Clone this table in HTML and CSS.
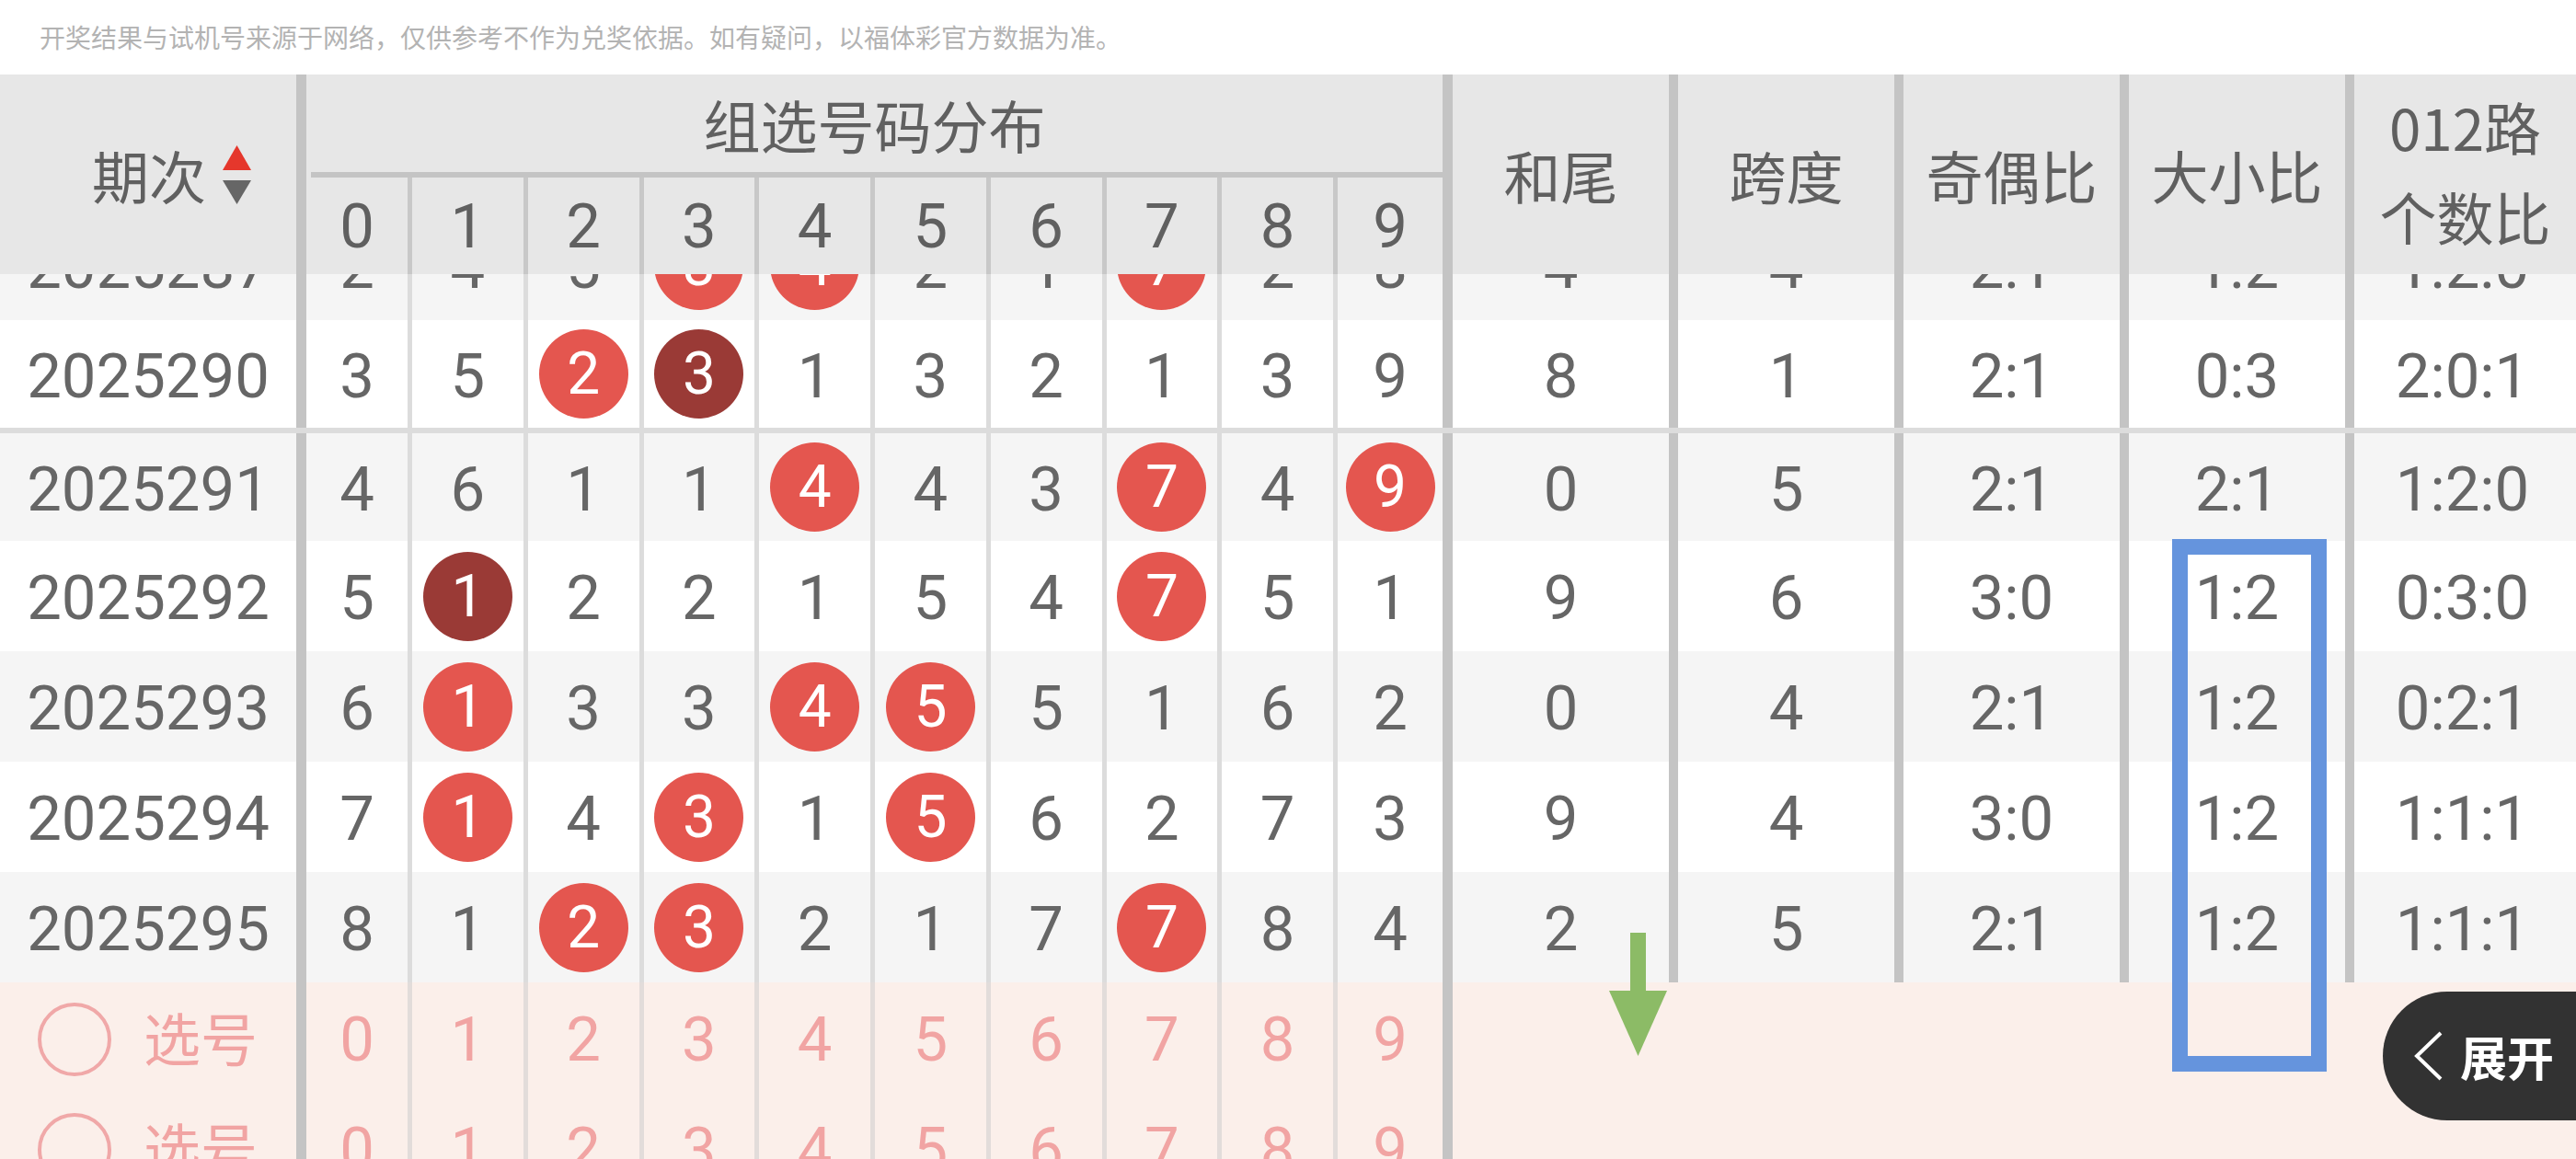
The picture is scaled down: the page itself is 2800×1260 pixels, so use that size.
FILE: index.html
```html
<!DOCTYPE html>
<html lang="zh-CN">
<head>
<meta charset="utf-8">
<title>组选号码分布</title>
<link rel="stylesheet" href="styles.css">
</head>
<body>
<div class="page">
  <div class="notice">开奖结果与试机号来源于网络，仅供参考不作为兑奖依据。如有疑问，以福体彩官方数据为准。</div>

  <div class="thead">
    <div class="th th-qi">
      <span class="qi-label">期次<svg class="sort" width="31" height="64" viewBox="0 0 31 64"><polygon points="15.5,0 31,27 0,27" fill="#e5372c"/><polygon points="0,38 31,38 15.5,64" fill="#666"/></svg></span>
    </div>
    <div class="th-group">
      <div class="group-title">组选号码分布</div>
      <div class="group-line"></div>
      <div class="group-digits">
        <div class="gd gd0">0</div>
        <div class="gd">1</div>
        <div class="gd">2</div>
        <div class="gd">3</div>
        <div class="gd">4</div>
        <div class="gd">5</div>
        <div class="gd">6</div>
        <div class="gd">7</div>
        <div class="gd">8</div>
        <div class="gd gd9">9</div>
      </div>
    </div>
    <div class="th r r0">和尾</div>
    <div class="th r">跨度</div>
    <div class="th r">奇偶比</div>
    <div class="th r">大小比</div>
    <div class="th r rl two">012路<br>个数比</div>
  </div>

  <div class="tbody">
    <div class="row odd first">
      <div class="c qi">2025287</div>
      <div class="c n n0">2</div>
      <div class="c n">4</div>
      <div class="c n">5</div>
      <div class="c n"><span class="ball">3</span></div>
      <div class="c n"><span class="ball">4</span></div>
      <div class="c n">2</div>
      <div class="c n">1</div>
      <div class="c n"><span class="ball">7</span></div>
      <div class="c n">2</div>
      <div class="c n n9">8</div>
      <div class="c r r0">4</div>
      <div class="c r">4</div>
      <div class="c r">2:1</div>
      <div class="c r">1:2</div>
      <div class="c r rl">1:2:0</div>
    </div>
    <div class="row sep">
      <div class="c qi">2025290</div>
      <div class="c n n0">3</div>
      <div class="c n">5</div>
      <div class="c n"><span class="ball">2</span></div>
      <div class="c n"><span class="ball dark">3</span></div>
      <div class="c n">1</div>
      <div class="c n">3</div>
      <div class="c n">2</div>
      <div class="c n">1</div>
      <div class="c n">3</div>
      <div class="c n n9">9</div>
      <div class="c r r0">8</div>
      <div class="c r">1</div>
      <div class="c r">2:1</div>
      <div class="c r">0:3</div>
      <div class="c r rl">2:0:1</div>
    </div>
    <div class="row odd short">
      <div class="c qi">2025291</div>
      <div class="c n n0">4</div>
      <div class="c n">6</div>
      <div class="c n">1</div>
      <div class="c n">1</div>
      <div class="c n"><span class="ball">4</span></div>
      <div class="c n">4</div>
      <div class="c n">3</div>
      <div class="c n"><span class="ball">7</span></div>
      <div class="c n">4</div>
      <div class="c n n9"><span class="ball">9</span></div>
      <div class="c r r0">0</div>
      <div class="c r">5</div>
      <div class="c r">2:1</div>
      <div class="c r">2:1</div>
      <div class="c r rl">1:2:0</div>
    </div>
    <div class="row">
      <div class="c qi">2025292</div>
      <div class="c n n0">5</div>
      <div class="c n"><span class="ball dark">1</span></div>
      <div class="c n">2</div>
      <div class="c n">2</div>
      <div class="c n">1</div>
      <div class="c n">5</div>
      <div class="c n">4</div>
      <div class="c n"><span class="ball">7</span></div>
      <div class="c n">5</div>
      <div class="c n n9">1</div>
      <div class="c r r0">9</div>
      <div class="c r">6</div>
      <div class="c r">3:0</div>
      <div class="c r">1:2</div>
      <div class="c r rl">0:3:0</div>
    </div>
    <div class="row odd">
      <div class="c qi">2025293</div>
      <div class="c n n0">6</div>
      <div class="c n"><span class="ball">1</span></div>
      <div class="c n">3</div>
      <div class="c n">3</div>
      <div class="c n"><span class="ball">4</span></div>
      <div class="c n"><span class="ball">5</span></div>
      <div class="c n">5</div>
      <div class="c n">1</div>
      <div class="c n">6</div>
      <div class="c n n9">2</div>
      <div class="c r r0">0</div>
      <div class="c r">4</div>
      <div class="c r">2:1</div>
      <div class="c r">1:2</div>
      <div class="c r rl">0:2:1</div>
    </div>
    <div class="row">
      <div class="c qi">2025294</div>
      <div class="c n n0">7</div>
      <div class="c n"><span class="ball">1</span></div>
      <div class="c n">4</div>
      <div class="c n"><span class="ball">3</span></div>
      <div class="c n">1</div>
      <div class="c n"><span class="ball">5</span></div>
      <div class="c n">6</div>
      <div class="c n">2</div>
      <div class="c n">7</div>
      <div class="c n n9">3</div>
      <div class="c r r0">9</div>
      <div class="c r">4</div>
      <div class="c r">3:0</div>
      <div class="c r">1:2</div>
      <div class="c r rl">1:1:1</div>
    </div>
    <div class="row odd">
      <div class="c qi">2025295</div>
      <div class="c n n0">8</div>
      <div class="c n">1</div>
      <div class="c n"><span class="ball">2</span></div>
      <div class="c n"><span class="ball">3</span></div>
      <div class="c n">2</div>
      <div class="c n">1</div>
      <div class="c n">7</div>
      <div class="c n"><span class="ball">7</span></div>
      <div class="c n">8</div>
      <div class="c n n9">4</div>
      <div class="c r r0">2</div>
      <div class="c r">5</div>
      <div class="c r">2:1</div>
      <div class="c r">1:2</div>
      <div class="c r rl">1:1:1</div>
    </div>
    <div class="row pick">
      <div class="c qi pick-qi"><span class="radio"></span><span class="pick-label">选号</span></div>
      <div class="c n n0">0</div>
      <div class="c n">1</div>
      <div class="c n">2</div>
      <div class="c n">3</div>
      <div class="c n">4</div>
      <div class="c n">5</div>
      <div class="c n">6</div>
      <div class="c n">7</div>
      <div class="c n">8</div>
      <div class="c n n9">9</div>
      <div class="c pick-rest"></div>
    </div>
    <div class="row pick">
      <div class="c qi pick-qi"><span class="radio"></span><span class="pick-label">选号</span></div>
      <div class="c n n0">0</div>
      <div class="c n">1</div>
      <div class="c n">2</div>
      <div class="c n">3</div>
      <div class="c n">4</div>
      <div class="c n">5</div>
      <div class="c n">6</div>
      <div class="c n">7</div>
      <div class="c n">8</div>
      <div class="c n n9">9</div>
      <div class="c pick-rest"></div>
    </div>
  </div>

  <div class="mark-box"></div>
  <svg class="mark-arrow" width="63" height="134" viewBox="0 0 63 134"><rect x="23" y="0" width="17" height="64" fill="#8cbb66"/><polygon points="0,63 63,63 31.5,134" fill="#8cbb66"/></svg>
  <div class="expand"><svg class="chev" width="32" height="54" viewBox="0 0 32 54"><polyline points="29,2 3,27 29,52" fill="none" stroke="#fff" stroke-width="4"/></svg><span class="expand-label">展开</span></div>
</div>
</body>
</html>
```

FILE: styles.css
```css
html, body {
  margin: 0;
  padding: 0;
  background: #ffffff;
}

.page {
  position: relative;
  width: 2800px;
  height: 1260px;
  overflow: hidden;
  font-family: Roboto, "Noto Sans CJK SC", sans-serif;
  font-weight: 400;
  color: #666666;
}

.notice {
  height: 81px;
  line-height: 81px;
  padding-left: 43px;
  font-family: "Noto Sans CJK SC", sans-serif;
  font-size: 28px;
  color: #b3b3b3;
  white-space: nowrap;
}

/* ---------- header ---------- */
.thead {
  display: flex;
  height: 217px;
  background: #e7e7e7;
  font-family: "Noto Sans CJK SC", sans-serif;
  font-size: 62px;
  color: #606060;
}

.th {
  box-sizing: border-box;
  display: flex;
  align-items: center;
  justify-content: center;
  flex: none;
}

.th-qi {
  width: 322px;
}

.qi-label {
  position: relative;
  line-height: 62px;
  margin-left: 2px;
}

.sort {
  position: absolute;
  left: calc(100% + 18px);
  top: -1px;
}

.th-group {
  box-sizing: border-box;
  flex: none;
  width: 1246px;
  border-left: 11px solid #c4c4c4;
  display: flex;
  flex-direction: column;
}

.group-title {
  height: 106px;
  display: flex;
  align-items: center;
  justify-content: center;
  padding-top: 1px;
  box-sizing: border-box;
}

.group-line {
  height: 6px;
  margin-left: 5px;
  background: #c4c4c4;
}

.group-digits {
  display: flex;
  height: 105px;
  font-family: Roboto, sans-serif;
  font-size: 67px;
}

.gd {
  box-sizing: border-box;
  flex: none;
  width: 125.75px;
  border-left: 5px solid #c8c8c8;
  display: flex;
  align-items: center;
  justify-content: center;
}

.gd0 {
  width: 110px;
  border-left: none;
}

.gd9 {
  width: 119px;
}

.r {
  box-sizing: border-box;
  flex: none;
  width: 245px;
  border-left: 10px solid #c4c4c4;
}

.r0 {
  width: 246px;
  border-left-width: 11px;
}

.rl {
  flex: 1 1 auto;
}

.two {
  text-align: center;
  line-height: 98px;
  padding-bottom: 8px;
}

/* ---------- body ---------- */
.tbody {
  height: 962px;
  overflow: hidden;
  font-size: 67px;
}

.row {
  display: flex;
  height: 120px;
  background: #ffffff;
}

.row.odd {
  background: #f5f5f5;
}

.row.first {
  margin-top: -70px;
}

.row.sep {
  box-sizing: border-box;
  height: 123px;
  border-bottom: 6px solid #dcdcdc;
}

.row.short {
  height: 117px;
}

.c {
  box-sizing: border-box;
  flex: none;
  display: flex;
  align-items: center;
  justify-content: center;
}

.qi {
  width: 322px;
  padding-top: 4px;
}

.n {
  width: 125.75px;
  border-left: 5px solid #dcdcdc;
  padding-top: 4px;
}

.n0 {
  width: 121px;
  border-left: 11px solid #c4c4c4;
}

.n9 {
  width: 119px;
}

.tbody .r {
  padding-top: 4px;
}

.ball {
  width: 97px;
  height: 97px;
  border-radius: 50%;
  background: #e4564f;
  color: #ffffff;
  font-size: 64px;
  display: flex;
  align-items: center;
  justify-content: center;
  margin-top: -4px;
}

.ball.dark {
  background: #9a3a36;
}

/* ---------- pick rows ---------- */
.row.pick {
  background: #fbefea;
  color: #f1a4a3;
}

.row.pick .n {
  border-left-color: #e2dcda;
}

.row.pick .n0 {
  border-left-color: #c4c4c4;
}

.pick-qi {
  justify-content: flex-start;
  padding-left: 41px;
  gap: 35px;
  font-family: "Noto Sans CJK SC", sans-serif;
  font-size: 62px;
}

.radio {
  box-sizing: border-box;
  width: 80px;
  height: 80px;
  border-radius: 50%;
  border: 4px solid #f0a8a8;
}

.pick-label {
  line-height: 62px;
  margin-top: -6px;
}

.pick-rest {
  flex: 1 1 auto;
  border-left: 11px solid #c4c4c4;
  align-self: stretch;
}

/* ---------- overlays ---------- */
.mark-box {
  position: absolute;
  left: 2361px;
  top: 586px;
  width: 168px;
  height: 579px;
  box-sizing: border-box;
  border: 17px solid #6594dd;
}

.mark-arrow {
  position: absolute;
  left: 1749px;
  top: 1014px;
}

.expand {
  position: absolute;
  left: 2590px;
  top: 1078px;
  width: 240px;
  height: 140px;
  box-sizing: border-box;
  border-radius: 70px 0 0 70px;
  background: #323232;
  display: flex;
  align-items: center;
  padding-left: 34px;
  gap: 18px;
}

.chev {
  flex: none;
}

.expand-label {
  font-family: "Noto Sans CJK SC", sans-serif;
  font-weight: 700;
  font-size: 51px;
  color: #ffffff;
  line-height: 51px;
}
```
